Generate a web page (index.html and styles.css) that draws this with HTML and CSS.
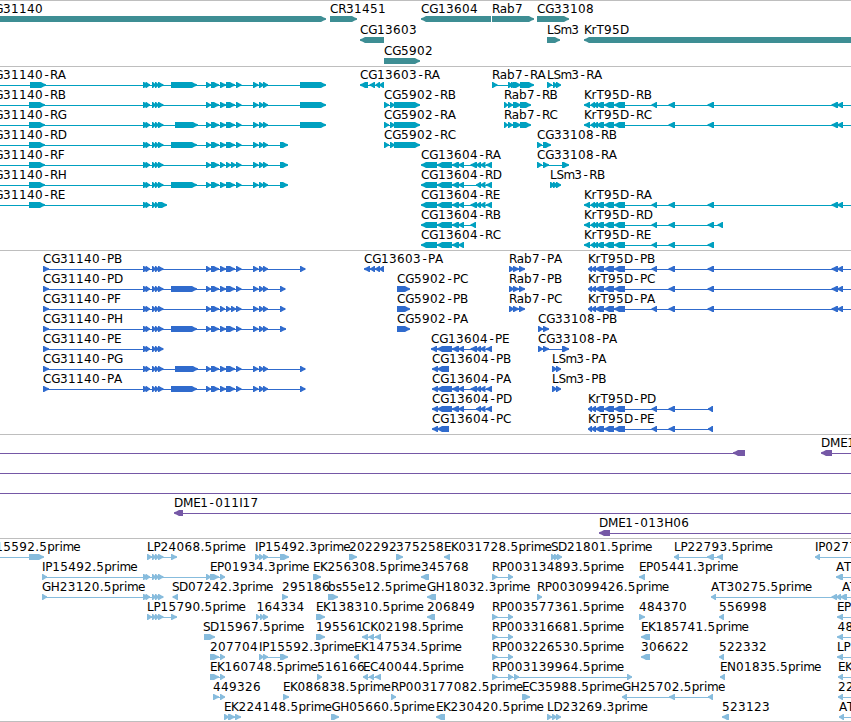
FILE: index.html
```html
<!DOCTYPE html>
<html lang="en">
<head>
    <meta charset="UTF-8">
    <title>Genome tracks</title>
    <link rel="stylesheet" href="styles.css">
</head>
<body>
<div id="tracks"></div>
<script>
    const NS='http://www.w3.org/2000/svg';
    const END=870;   //past the right edge

    //common exon groups
    const A=[[143,148],[145.5,150],[152,156],[155,159]];
    const A1=[...A,[158,163.5]];
    const B=[[206,211],[211,219],[220,226],[226,235],[236,241.5]];
    const BF=[[206,211],[211,219],[220,225],[226,231],[231,236],[236,241.5]];
    const C=[[253,258.5],[259,264],[263,268]];
    const BIG=[171,197], BIG2=[175,198], LAST=[300,326], MID=[280,288];
    const K=[[604,614],[614,625]];
    const KR=[[584,590],[590.5,595],[593,598],[596,604],...K];
    const KP=[[588,592],[591,596],[595,604],...K];
    const K1=[651.5,657], K2=[668.5,675], K3=[707.5,714], K4=[[831.5,838],[837,843],[END,END]];
    const D=[[452,459],[458,464]];
    const D1=[470.5,477], D2=[[476,481],[480,485.5],[486,492]];
    const DR=[[421,437],[437,452]];
    const C59=[[384,389],[390,395],[394,420]];
    const RAB=[[504,508],[508,513],[513,521],[520,531]];
    const RABP=[[509,514],[513,519],[519,525]];
    const LP=[[147,152],[152,156],[155,159],[158,163.5],[171,177]];
    const RP=[[492,497.5],[508,513]];

    //[label, x, strand, exons]
    const tracks=[
        {name:'genes',rows:[
            [['CG31140',-14,1,[[-14,326]]],['CR31451',330,1,[[330,357]]],['CG13604',421,-1,[[421,491]]],['Rab7',492,1,[[492,534]]],['CG33108',537,1,[[537,569]]]],
            [['CG13603',360,-1,[[360,384]]],['LSm3',547,1,[[547,560]]],['KrT95D',584,-1,[[584,END]]]],
            [['CG5902',384,1,[[384,420]]]]
        ]},
        {name:'transcripts',rows:[
            [['CG31140-RA',-14,1,[[-14,-9],[30,46],...A1,BIG,...B,...C,LAST]],['CG13603-RA',360,-1,[[360,368],[369.5,375],[375.5,380],[379,384]]],['Rab7-RA',492,1,[[492,497.5],[508,513],[511,517],[513,521],[520,534]]],['LSm3-RA',547,1,[[547,552],[553,557.5],[556,561]]]],
            [['CG31140-RB',-14,1,[[-14,-9],[29,45],...A1,...B,...C,LAST]],['CG5902-RB',384,1,C59],['Rab7-RB',504,1,RAB],['KrT95D-RB',584,-1,[...KR,K1,K2,K3,...K4]]],
            [['CG31140-RG',-14,1,[[-14,-9],[29,45],...A1,BIG2,...B,...C,LAST]],['CG5902-RA',384,1,C59],['Rab7-RC',504,1,RAB],['KrT95D-RC',584,-1,[...KR,K2,K3,...K4]]],
            [['CG31140-RD',-14,1,[[-14,-9],[29,45],...A1,BIG,...B,...C,MID]],['CG5902-RC',384,1,C59],['CG33108-RB',537,1,[[537,542],[543,551]]]],
            [['CG31140-RF',-14,1,[[-14,-9],[29,45],...A1,...BF,...C,MID]],['CG13604-RA',421,-1,[...DR,...D,D1,...D2]],['CG33108-RA',537,1,[[537,542],[543,549],[562,569]]]],
            [['CG31140-RH',-14,1,[[-14,-9],[29,45],...A1,BIG,...B,...C,MID]],['CG13604-RD',421,-1,[...DR,...D,...D2]],['LSm3-RB',550,1,[[550,555],[553,558],[556,561]]]],
            [['CG31140-RE',-14,1,[[-14,-9],[29,45],...A,[158,167]]],['CG13604-RE',421,-1,[...DR,...D,D1,...D2]],['KrT95D-RA',584,-1,[...KR,K1,K2,K3,...K4]]],
            [['CG13604-RB',421,-1,[...DR,...D,[470.5,476]]],['KrT95D-RD',584,-1,[...KR,K1,K2,K3,[717.5,723]]]],
            [['CG13604-RC',421,-1,[...DR,...D]],['KrT95D-RE',584,-1,[...KR,K1,K2,K3]]]
        ]},
        {name:'cds',rows:[
            [['CG31140-PB',43,1,[[43,49],...A1,...B,...C,[300,305.5]]],['CG13603-PA',364,-1,[[364,370],[370,375],[375,380],[379,384]]],['Rab7-PA',509,1,RABP],['KrT95D-PB',588,-1,[...KP,K1,K2,K3,...K4]]],
            [['CG31140-PD',43,1,[[43,49],...A1,BIG,...B,...C,[280,285.5]]],['CG5902-PC',397,1,[[397,410]]],['Rab7-PB',509,1,RABP],['KrT95D-PC',588,-1,[...KP,K2,K3,...K4]]],
            [['CG31140-PF',43,1,[[43,49],...A1,...BF,...C,[280,285.5]]],['CG5902-PB',397,1,[[397,410]]],['Rab7-PC',509,1,RABP],['KrT95D-PA',588,-1,[...KP,K1,K2,K3,...K4]]],
            [['CG31140-PH',43,1,[[43,49],...A1,BIG,...B,...C,[280,286]]],['CG5902-PA',397,1,[[397,410]]],['CG33108-PB',538,1,[[538,543],[543,549]]]],
            [['CG31140-PE',43,1,[[43,49],...A1]],['CG13604-PE',431,-1,[[431,437],[437,452],...D,D1,...D2]],['CG33108-PA',538,1,[[538,543],[543,549],[562,569]]]],
            [['CG31140-PG',43,1,[[43,49],...A1,BIG2,...B,...C,[300,305.5]]],['CG13604-PB',432,-1,[[432,438],[437,449]]],['LSm3-PA',552,1,[[552,557],[556,561]]]],
            [['CG31140-PA',43,1,[[43,49],...A1,BIG,...B,...C,[300,305.5]]],['CG13604-PA',432,-1,[[432,438],[437,452],...D,D1,...D2]],['LSm3-PB',552,1,[[552,557],[556,561]]]],
            [['CG13604-PD',432,-1,[[432,438],[437,452],...D,...D2]],['KrT95D-PD',588,-1,[...KP,K1,K2,[708,713]]]],
            [['CG13604-PC',432,-1,[[432,438],[437,449]]],['KrT95D-PE',588,-1,[...KP,K1,K2,[708,713]]]]
        ]},
        {name:'bacs',rows:[
            [['',0,-1,[[-20,-10],[733,745]]],['DME1',821,-1,[[821,832],[END,END]]]],
            [['',0,-1,[[-20,-10],[END,END]]]],
            [['',0,-1,[[-20,-10],[END,END]]]],
            [['DME1-011I17',174,-1,[[174,183],[END,END]]]],
            [['DME1-013H06',599,-1,[[599,610],[END,END]]]]
        ]},
        {name:'ests',rows:[
            [['IP15592.5prime',-15,1,[[-15,-10],[29,44]]],['LP24068.5prime',147,1,LP],['IP15492.3prime',255,1,[[255,260],[259,264],[263,268],[280,289]]],['202292',349,1,[[349,357]]],['375258',396,1,[[396,403]]],['EK031728.5prime',444,-1,[[444,450]]],['SD21801.5prime',551,1,[[551,556],[554,559],[557,562]]],['LP22793.5prime',674,-1,[[674,679],[707,714],[717,723]]],['IP0277',815,-1,[[815,820],[END,END]]]],
            [['IP15492.5prime',42,1,[[42,47],...A1,[206,211]]],['EP01934.3prime',210,1,[[210,219],[220,225]]],['EK256308.5prime',313,1,[[313,321]]],['345768',421,-1,[[421,429]]],['RP003134893.5prime',492,1,RP],['EP05441.3prime',639,-1,[[639,645]]],['AT',836,-1,[[836,843],[END,END]]]],
            [['GH23120.5prime',42,1,[[42,47],...A1]],['SD07242.3prime',172,-1,[[172.5,178]]],['295186',282,1,[[282,288]]],['bs55e12.5prime',328,1,[[328,338]]],['GH18032.3prime',427,-1,[[427,436]]],['RP003099426.5prime',537,1,[[537,542]]],['AT30275.5prime',711,-1,[[711,716],[831.5,837],[836,841],[840,847],[END,END]]],['AT',842,-1,[]]],
            [['LP15790.5prime',147,1,LP],['164334',256.5,1,[[256,260],[260,264],[263,268]]],['EK138310.5prime',316,1,[[316,325]]],['206849',427,-1,[[427,435]]],['RP003577361.5prime',492,1,RP],['484370',639,1,[[639,645]]],['556998',719,-1,[[719,724]]],['EP',837,-1,[[837,843],[END,END]]]],
            [['SD15967.5prime',203,1,[[204,215]]],['195561',316,1,[[316,325]]],['CK02198.5prime',362,-1,[[362,368],[368.5,374],[375,381]]],['RP003316681.5prime',492,1,RP],['EK185741.5prime',641,-1,[[641,650]]],['48',837.5,-1,[[837,843],[END,END]]]],
            [['207704',210,1,[[210,219],[220,225]]],['IP15592.3prime',259,1,[[259,264],[263,268],[280,288]]],['EK147534.5prime',354,-1,[[354,359]]],['RP003226530.5prime',492,1,RP],['306622',641,-1,[[641,650]]],['522332',719,-1,[[719,724]]],['LP',837,-1,[[837,843],[END,END]]]],
            [['EK160748.5prime',210,1,[[210,219],[220,225]]],['516166',317,1,[[317,322]]],['EC40044.5prime',363,-1,[[363,368],[369,374],[375,381]]],['RP003139964.5prime',492,1,[...RP,[514,519],[627,632]]],['EN01835.5prime',720,-1,[[720,725]]],['EK',838,-1,[[838,843],[END,END]]]],
            [['449326',213,1,[[213,219],[220,225]]],['EK086838.5prime',283,1,[[283,289]]],['RP003177082.5prime',391,1,[[391,396]]],['EC35988.5prime',522,1,[[522,530]]],['GH25702.5prime',622,-1,[[622,627],[669,675],[708,713]]],['22',838,-1,[[838,843],[END,END]]]],
            [['EK224148.5prime',224,1,[[224,229],[228,235],[235,241]]],['GH05660.5prime',331.5,1,[[331,339]]],['EK230420.5prime',436,-1,[[436,445]]],['LD23269.3prime',547,1,[[547,552],[552,557],[556,561]]],['523123',722,-1,[[722,729]]],['AT',839,-1,[[839,844],[END,END]]]]
        ]}
    ];

    //advance of each character in a label
    const adv={C:8.3,G:8.8,D:9,M:10.3,E:7,K:7.5,L:6.4,P:7,R:7.7,S:7,H:9,I:3.2,N:9,A:8,T:7.6,B:7,
        '-':7,'.':4,p:7.3,r:4.9,i:3.1,m:10.8,e:7,a:7.4,b:7.8,s:6};

    function el(name,attrs,parent) {
        let e=document.createElementNS(NS,name);
        for(let k in attrs) e.setAttribute(k,attrs[k]);
        parent.appendChild(e);
        return e;
    }

    function drawLabel(svg,label,x) {
        let xs=[];
        for(let c of label){
            xs.push((c=='-'?x+1.3:x).toFixed(1));
            x+=adv[c]||8;
        }
        el('text',{class:'label',x:xs.join(' '),y:12},svg).textContent=label;
    }

    //box with a rounded point at one end, 6px high
    function drawExon(svg,s,e,dir) {
        let t=Math.min(5,e-s-1);
        let tip=dir>0?e:s, back=dir>0?s:e;
        let points=[[back,15],[tip-dir*t,15],[tip-dir*t*.45,16.5],[tip,17.3],[tip,18.7],[tip-dir*t*.45,19.5],[tip-dir*t,21],[back,21]];
        el('polygon',{class:'exon',points:points.join(' ')},svg);
    }

    const box=document.getElementById('tracks');
    tracks.forEach(track=>{
        let div=document.createElement('div');
        div.className='track '+track.name;
        box.appendChild(div);
        track.rows.forEach(row=>{
            let svg=el('svg',{class:'row'},div);
            row.forEach(([label,x,dir,exons])=>{
                if(exons.length>1){
                    let s=exons[0][0]+1, e=exons[exons.length-1][1]-1;
                    el('rect',{class:'intron',x:s,y:18,width:e-s,height:1},svg);
                }
                exons.forEach(([s,e])=>{
                    if(e>s) drawExon(svg,s,e,dir);
                });
                if(label) drawLabel(svg,label,x);
            });
        });
    });
</script>
</body>
</html>
```

FILE: styles.css
```css
*{
    margin: 0;
    padding: 0;
}
body{
    background: #fff;
    overflow: hidden;
}
#tracks{
    display: flex;
    flex-direction: column;
    width: 851px;
    border-bottom: 1px solid #bebebe;
}
.track{
    border-top: 1px solid #bebebe;
    padding-bottom: 3px;
}
.row{
    display: block;
    width: 851px;
    height: 20px;
    overflow: visible;
}
.genes .row{
    height: 21px;
}
.genes,.ests{
    padding-bottom: 2px;
}
.label{
    font-family: "DejaVu Sans", sans-serif;
    font-size: 12px;
    fill: #000;
}
.genes{
    color: #3e8e94;
}
.transcripts{
    color: #00a0c0;
}
.cds{
    color: #306bcd;
}
.bacs{
    color: #7558a6;
}
.ests{
    color: #87bcdd;
}
.exon,.intron{
    fill: currentColor;
}
```
